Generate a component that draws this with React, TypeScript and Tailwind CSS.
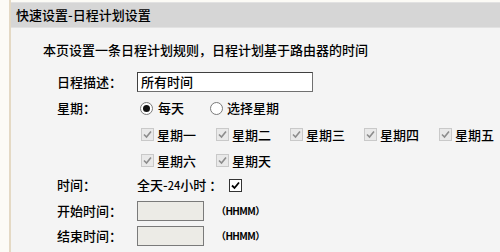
import React from "react";

const font = { fontFamily: '"Noto Sans CJK SC", "Noto Sans", sans-serif' };

function DisabledCheck() {
  return (
    <span className="inline-flex items-center justify-center w-[13px] h-[13px] border border-[#c9c9c9] bg-[#e9e9e9] shrink-0">
      <svg width="9" height="9" viewBox="0 0 9 9">
        <path d="M1 4.5 L3.5 7 L8 1.5" stroke="#8c8c8c" strokeWidth="1.6" fill="none" />
      </svg>
    </span>
  );
}

function Day({ label, w }: { label: string; w: string }) {
  return (
    <div className={`flex items-center gap-[3px] ${w}`}>
      <DisabledCheck />
      <span>{label}</span>
    </div>
  );
}

export default function App() {
  return (
    <div
      className="w-[500px] h-[252px] bg-[#fcfbf6] pl-[9px] flex overflow-hidden text-[13px] leading-[16px] text-black font-medium"
      style={font}
    >
      <div className="flex-1 border-l-2 border-[#e4d9c4] bg-[#f4f4f4] flex flex-col">
        <div className="h-[2px] bg-[#fcfbf6]" />
        <div className="h-[26px] bg-[#d6d6d6] border-y border-[#e2e2e2] flex items-center pl-[5px]">
          快速设置-日程计划设置
        </div>
        <div className="pl-[32px] pt-[14px] h-[41px]">本页设置一条日程计划规则，日程计划基于路由器的时间</div>
        <div className="pl-[46px] flex flex-col">
          <div className="h-[26px] flex items-center">
            <span className="w-[80px]">日程描述：</span>
            <div className="w-[176px] h-[20px] bg-white border border-[#707070] border-t-[#404040] border-l-[#404040] flex items-center pl-[3px]">
              所有时间
            </div>
          </div>
          <div className="h-[26px] flex items-center">
            <span className="w-[83px]">星期：</span>
            <div className="flex items-center w-[70px] gap-[5px]">
              <span className="w-[13px] h-[13px] rounded-full border border-[#7a7a7a] bg-white flex items-center justify-center">
                <span className="w-[7px] h-[7px] rounded-full bg-[#111]" />
              </span>
              <span>每天</span>
            </div>
            <div className="flex items-center gap-[4px]">
              <span className="w-[13px] h-[13px] rounded-full border border-[#7a7a7a] bg-white" />
              <span>选择星期</span>
            </div>
          </div>
          <div className="h-[27px] flex items-center pl-[84px]">
            <Day label="星期一" w="w-[75px]" />
            <Day label="星期二" w="w-[74px]" />
            <Day label="星期三" w="w-[74px]" />
            <Day label="星期四" w="w-[75px]" />
            <Day label="星期五" w="w-[60px]" />
          </div>
          <div className="h-[25px] flex items-center pl-[84px]">
            <Day label="星期六" w="w-[75px]" />
            <Day label="星期天" w="w-[74px]" />
          </div>
          <div className="h-[24px] flex items-center">
            <span className="w-[80px]">时间：</span>
            <span>
              全天-<span className="text-[11px]">24</span>小时 ：
            </span>
            <span className="ml-[7px] w-[13px] h-[13px] border border-[#333] bg-white flex items-center justify-center">
              <svg width="9" height="9" viewBox="0 0 9 9">
                <path d="M1 4.5 L3.5 7 L8 1.5" stroke="#000" strokeWidth="1.8" fill="none" />
              </svg>
            </span>
          </div>
          <div className="h-[28px] flex items-center">
            <span className="w-[80px]">开始时间：</span>
            <div className="w-[67px] h-[20px] bg-[#ecebe6] border border-[#7a7a7a]" />
            <span className="ml-[12px] text-[10px] tracking-[-0.6px] font-bold">（HHMM）</span>
          </div>
          <div className="h-[22px] flex items-center">
            <span className="w-[80px]">结束时间：</span>
            <div className="w-[67px] h-[20px] bg-[#ecebe6] border border-[#7a7a7a]" />
            <span className="ml-[12px] text-[10px] tracking-[-0.6px] font-bold">（HHMM）</span>
          </div>
        </div>
      </div>
    </div>
  );
}
